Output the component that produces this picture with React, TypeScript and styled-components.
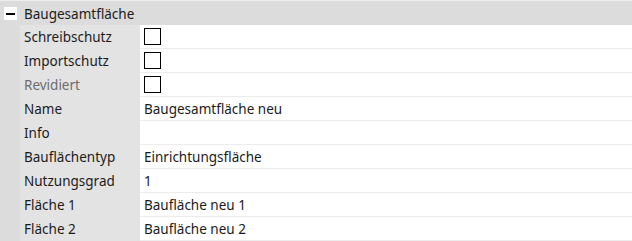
import React from 'react';
import styled, { createGlobalStyle } from 'styled-components';

const GlobalStyle = createGlobalStyle`
  html, body {
    margin: 0;
    padding: 0;
    background: #ffffff;
  }
  body {
    font-family: 'Noto Sans', 'Open Sans', sans-serif;
    font-size: 13.5px;
    color: #1b1b1b;
  }
`;

const Grid = styled.div`
  width: 632px;
  height: 241px;
  overflow: hidden;
  background: #ffffff;
`;

const GroupHeader = styled.div`
  height: 24px;
  border-top: 1px solid #ededed;
  background: #dcdcdc;
  display: flex;
  align-items: center;
  gap: 7px;
  padding-left: 4px;
`;

const ToggleBox = styled.div`
  width: 13px;
  height: 13px;
  background: #ffffff;
  display: flex;
  align-items: center;
  justify-content: center;
  margin-top: 1px;

  &:after {
    content: '';
    width: 9px;
    height: 2px;
    background: #000000;
  }
`;

const GroupTitle = styled.span`
  line-height: 24px;
  padding-top: 1px;
`;

const Row = styled.div`
  display: grid;
  grid-template-columns: 20px 120px 1fr;
  height: 24px;
`;

const Indent = styled.div`
  background: #dcdcdc;
`;

const Label = styled.div<{ disabled?: boolean }>`
  background: #e3e3e3;
  padding: 1px 0 0 4px;
  line-height: 23px;
  white-space: nowrap;
  color: ${(p) => (p.disabled ? '#6d6d6d' : '#1b1b1b')};
`;

const Value = styled.div`
  background: #ffffff;
  border-bottom: 1px solid #ececec;
  padding: 1px 0 0 4px;
  line-height: 22px;
  display: flex;
  align-items: center;
  white-space: nowrap;
`;

const CheckBox = styled.div`
  width: 15px;
  height: 15px;
  border: 1px solid #000000;
  background: #ffffff;
  margin-top: -1px;
`;

type Prop = { label: string; value?: string; check?: boolean; disabled?: boolean };

const props: Prop[] = [
  { label: 'Schreibschutz', check: true },
  { label: 'Importschutz', check: true },
  { label: 'Revidiert', check: true, disabled: true },
  { label: 'Name', value: 'Baugesamtfläche neu' },
  { label: 'Info', value: '' },
  { label: 'Bauflächentyp', value: 'Einrichtungsfläche' },
  { label: 'Nutzungsgrad', value: '1' },
  { label: 'Fläche 1', value: 'Baufläche neu 1' },
  { label: 'Fläche 2', value: 'Baufläche neu 2' },
];

export default function App() {
  return (
    <>
      <GlobalStyle />
      <Grid>
        <GroupHeader>
          <ToggleBox />
          <GroupTitle>Baugesamtfläche</GroupTitle>
        </GroupHeader>
        {props.map((p) => (
          <Row key={p.label}>
            <Indent />
            <Label disabled={p.disabled}>{p.label}</Label>
            <Value>{p.check ? <CheckBox /> : p.value}</Value>
          </Row>
        ))}
      </Grid>
    </>
  );
}
